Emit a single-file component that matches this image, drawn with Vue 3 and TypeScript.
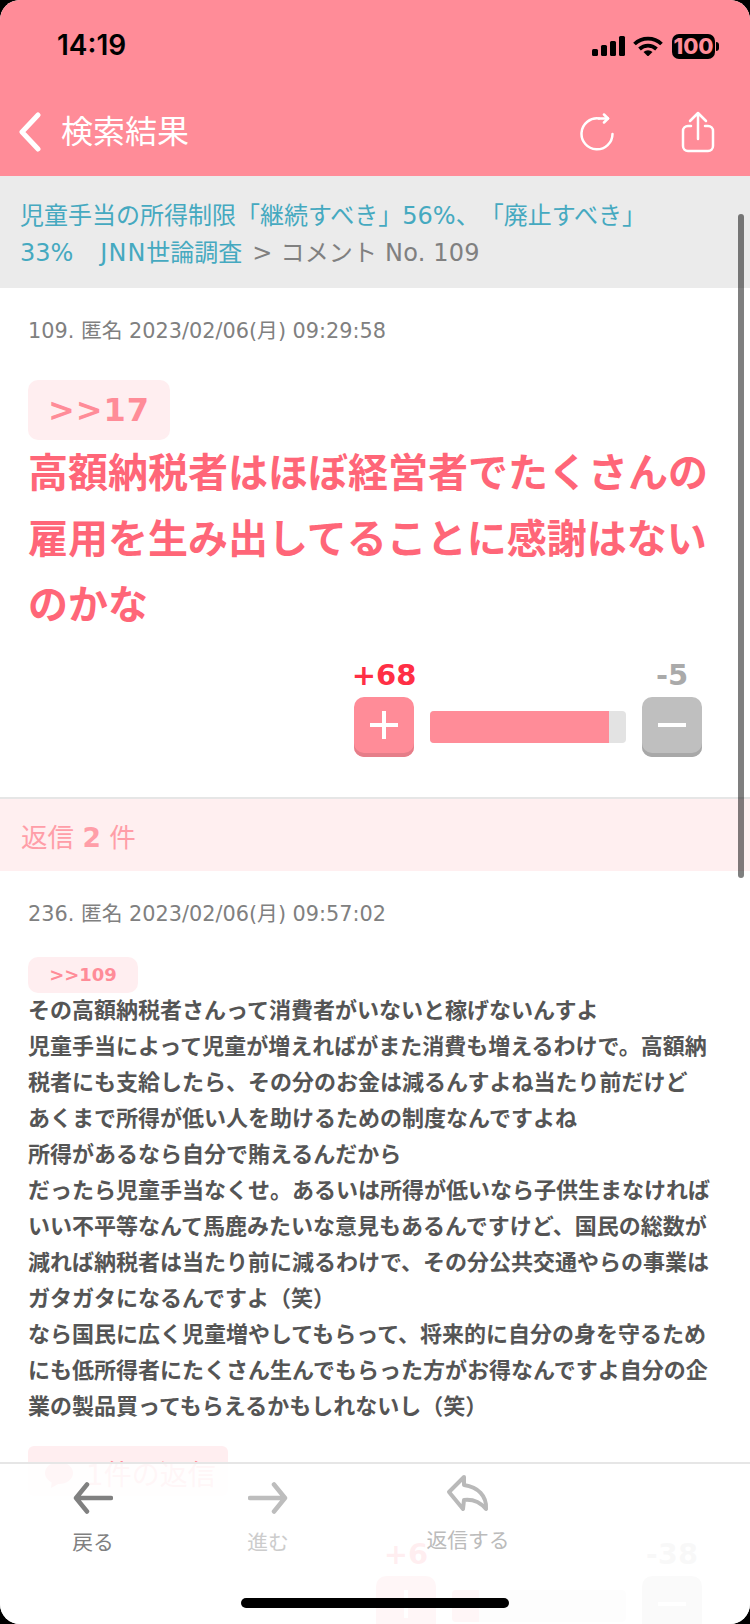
<script setup lang="ts">
interface Comment {
  no: number
  date: string
  anchor: string
  paragraphs: string[]
  plus: number
  minus: number
  barWidth: number
  barFill: number
  replies?: number
}

const first: Comment = {
  no: 109,
  date: '2023/02/06(月) 09:29:58',
  anchor: '>>17',
  paragraphs: ['高額納税者はほぼ経営者でたくさんの雇用を生み出してることに感謝はないのかな'],
  plus: 68,
  minus: 5,
  barWidth: 196,
  barFill: 179
}

const second: Comment = {
  no: 236,
  date: '2023/02/06(月) 09:57:02',
  anchor: '>>109',
  paragraphs: [
    'その高額納税者さんって消費者がいないと稼げないんすよ',
    '児童手当によって児童が増えればがまた消費も増えるわけで。高額納税者にも支給したら、その分のお金は減るんすよね当たり前だけど',
    'あくまで所得が低い人を助けるための制度なんですよね',
    '所得があるなら自分で賄えるんだから',
    'だったら児童手当なくせ。あるいは所得が低いなら子供生まなければいい不平等なんて馬鹿みたいな意見もあるんですけど、国民の総数が減れば納税者は当たり前に減るわけで、その分公共交通やらの事業はガタガタになるんですよ（笑）',
    'なら国民に広く児童増やしてもらって、将来的に自分の身を守るためにも低所得者にたくさん生んでもらった方がお得なんですよ自分の企業の製品買ってもらえるかもしれないし（笑）'
  ],
  plus: 6,
  minus: 38,
  barWidth: 174,
  barFill: 27,
  replies: 1
}
</script>

<template>
  <div class="screen">
    <header class="top">
      <div class="status">
        <span class="time">14:19</span>
        <div class="status-icons">
          <svg class="signal" width="34" height="20" viewBox="0 0 34 20">
            <rect x="0" y="13" width="6" height="7" rx="1.5" />
            <rect x="9" y="9" width="6" height="11" rx="1.5" />
            <rect x="18" y="5" width="6" height="15" rx="1.5" />
            <rect x="27" y="0" width="6" height="20" rx="1.5" />
          </svg>
          <svg class="wifi" width="30" height="20" viewBox="0 0 30 20">
            <path d="M1.500 8a19.500 19.500 0 0 1 27 0" />
            <path d="M6.500 13a12.500 12.500 0 0 1 17 0" />
            <path class="wifi-dot" d="M15 20.500l-4.500-4.500a6.400 6.400 0 0 1 9 0z" />
          </svg>
          <div class="battery">
            <span class="battery-body">100</span>
            <span class="battery-nub"></span>
          </div>
        </div>
      </div>
      <div class="nav">
        <svg class="back" width="24" height="40" viewBox="0 0 24 40">
          <path d="M20 3L4 20l16 17" />
        </svg>
        <span class="nav-title">検索結果</span>
        <svg class="reload" width="34" height="38" viewBox="0 0 34 38">
          <path d="M19 5.500A15.500 15.500 0 1 0 32.500 21" />
          <path d="M24 1.500l4 4-4 4" />
          <path d="M19 5.500h9" />
        </svg>
        <svg class="share" width="34" height="42" viewBox="0 0 34 42">
          <path d="M10 15H7a5 5 0 0 0-5 5v15a5 5 0 0 0 5 5h20a5 5 0 0 0 5-5V20a5 5 0 0 0-5-5h-3" />
          <path d="M17 28V2M9 10l8-8 8 8" />
        </svg>
      </div>
    </header>

    <div class="crumb">
      <span class="crumb-link">児童手当の所得制限「継続すべき」56%、「廃止すべき」<br />33%　<span class="crumb-jnn">JNN</span>世論調査</span>
      <span class="crumb-tail">&gt; コメント No. 109</span>
    </div>

    <section class="comment first">
      <div class="meta">{{ first.no }}. 匿名 {{ first.date }}</div>
      <div class="anchor anchor-large">{{ first.anchor }}</div>
      <p class="headline">{{ first.paragraphs[0] }}</p>
      <div class="vote-row">
        <div class="vote">
          <span class="count count-plus">+{{ first.plus }}</span>
          <button class="vote-btn btn-plus"><i class="bar-h"></i><i class="bar-v"></i></button>
        </div>
        <div class="meter" :style="{ width: first.barWidth + 'px' }">
          <div class="meter-fill" :style="{ width: first.barFill + 'px' }"></div>
        </div>
        <div class="vote">
          <span class="count count-minus">-{{ first.minus }}</span>
          <button class="vote-btn btn-minus"><i class="bar-h"></i></button>
        </div>
      </div>
    </section>

    <div class="reply-band">返信 <b>2</b> 件</div>

    <section class="comment second">
      <div class="meta">{{ second.no }}. 匿名 {{ second.date }}</div>
      <div class="anchor anchor-small">{{ second.anchor }}</div>
      <div class="body">
        <p v-for="(line, i) in second.paragraphs" :key="i">{{ line }}</p>
      </div>
      <div class="replies">
        <svg width="30" height="26" viewBox="0 0 30 26">
          <ellipse cx="15" cy="11" rx="14" ry="11" />
          <path d="M8 18l-1 8 9-5z" />
        </svg>
        <span>{{ second.replies }}件の返信</span>
      </div>
      <div class="vote-row vote-row-second">
        <div class="vote">
          <span class="count count-plus">+{{ second.plus }}</span>
          <button class="vote-btn btn-plus"><i class="bar-h"></i><i class="bar-v"></i></button>
        </div>
        <div class="meter" :style="{ width: second.barWidth + 'px' }">
          <div class="meter-fill" :style="{ width: second.barFill + 'px' }"></div>
        </div>
        <div class="vote">
          <span class="count count-minus">-{{ second.minus }}</span>
          <button class="vote-btn btn-minus"><i class="bar-h"></i></button>
        </div>
      </div>
    </section>

    <div class="scrollbar"></div>

    <nav class="tabbar">
      <div class="tab tab-back">
        <svg width="40" height="32" viewBox="0 0 40 32">
          <path d="M38 16H3M14 2.500L3 16l11 13.500" />
        </svg>
        <span>戻る</span>
      </div>
      <div class="tab tab-forward">
        <svg width="40" height="32" viewBox="0 0 40 32">
          <path d="M2 16h35M26 2.500L37 16 26 29.500" />
        </svg>
        <span>進む</span>
      </div>
      <div class="tab tab-reply">
        <svg width="44" height="38" viewBox="0 0 44 38">
          <path d="M18 3L3 18l14 17 1-9c9-1 16 2 22 9 1-13-8-22-22-24z" />
        </svg>
        <span>返信する</span>
      </div>
    </nav>

    <div class="home"></div>
  </div>
</template>

<style scoped>
.screen {
  position: relative;
  width: 750px;
  height: 1624px;
  overflow: hidden;
  background: #fff;
  border-radius: 20px;
  font-family: "DejaVu Sans", "Noto Sans CJK JP", sans-serif;
  text-spacing-trim: space-all;
}

.top {
  height: 176px;
  background: #ff8c98;
}

.status {
  height: 96px;
  padding: 27px 31px 0 57px;
  display: flex;
  justify-content: space-between;
  align-items: flex-start;
  box-sizing: border-box;
}

.time {
  font-family: Inter, sans-serif;
  font-size: 28px;
  font-weight: 600;
  line-height: 36px;
  color: #000;
}

.status-icons {
  display: flex;
  align-items: center;
  gap: 9px;
  height: 32px;
  margin-top: 3px;
}

.signal {
  fill: #000;
  margin-right: -2px;
}

.wifi {
  fill: none;
  stroke: #000;
  stroke-width: 3.800;
}

.wifi-dot {
  fill: #000;
  stroke: none;
}

.battery {
  display: flex;
  align-items: center;
  gap: 1px;
}

.battery-body {
  width: 43px;
  height: 25px;
  background: #000;
  border-radius: 7px;
  color: #ff8c98;
  font-family: Inter, sans-serif;
  font-size: 22px;
  font-weight: 800;
  line-height: 25px;
  text-align: center;
}

.battery-nub {
  width: 3px;
  height: 9px;
  background: #000;
  border-radius: 0 3px 3px 0;
}

.nav {
  height: 72px;
  display: flex;
  align-items: center;
  padding-left: 18px;
  padding-right: 35px;
}

.nav svg {
  fill: none;
  stroke: #fff;
  stroke-linecap: round;
  stroke-linejoin: round;
}

.back {
  stroke-width: 5;
}

.nav-title {
  flex: 1;
  margin-left: 19px;
  font-size: 32px;
  line-height: 40px;
  color: #fff;
}

.reload {
  stroke-width: 2.500;
  margin-right: 67px;
}

.share {
  stroke-width: 2.500;
}

.crumb {
  height: 112px;
  box-sizing: border-box;
  padding: 22px 20px 0;
  background: #ebebeb;
  font-size: 24px;
  line-height: 37px;
  color: #808080;
}

.crumb-link {
  color: #45a9c0;
}

.crumb-jnn {
  margin-left: 3px;
  letter-spacing: 1px;
}

.crumb-tail {
  margin-left: 10px;
  letter-spacing: 0.2px;
}

.comment {
  padding: 27px 0 0 28px;
}

.first {
  height: 511px;
  box-sizing: border-box;
  border-bottom: 2px solid #e6e6e6;
}

.meta {
  font-size: 20.800px;
  line-height: 32px;
  color: #808080;
}

.anchor {
  background: #ffeef0;
  color: #ff8c98;
  font-weight: 700;
  text-align: center;
  box-sizing: border-box;
}

.anchor-large {
  width: 142px;
  height: 60px;
  margin-top: 33px;
  border-radius: 10px;
  font-size: 32px;
  line-height: 60px;
  letter-spacing: 1px;
}

.anchor-small {
  width: 110px;
  height: 36px;
  margin-top: 27px;
  border-radius: 10px;
  font-size: 18px;
  line-height: 36px;
}

.headline {
  margin: 0;
  width: 690px;
  font-size: 40px;
  font-weight: 700;
  line-height: 66px;
  color: #ff6678;
}

.vote-row {
  display: flex;
  align-items: flex-end;
  justify-content: flex-end;
  padding-right: 48px;
  margin-top: 20px;
}

.vote-row-second {
  margin-top: 41px;
}

.vote {
  display: flex;
  flex-direction: column;
  align-items: center;
  width: 60px;
  gap: 5px;
}

.count {
  font-size: 29px;
  font-weight: 700;
  line-height: 34px;
  white-space: nowrap;
}

.count-plus {
  color: #ff2f45;
}

.count-minus {
  color: #aaaaaa;
}

.vote-btn {
  position: relative;
  width: 60px;
  height: 60px;
  padding: 0;
  border: 0;
  border-radius: 10px;
  display: block;
}

.btn-plus {
  background: #ff8c98;
  box-shadow: inset 0 -4px 0 #e57e89;
}

.btn-minus {
  background: #bfbfbf;
  box-shadow: inset 0 -4px 0 #a8a8a8;
}

.bar-h,
.bar-v {
  position: absolute;
  background: #fff;
}

.bar-h {
  left: 16px;
  top: 26px;
  width: 28px;
  height: 4px;
}

.bar-v {
  left: 28px;
  top: 14px;
  width: 4px;
  height: 28px;
}

.meter {
  height: 32px;
  margin: 0 16px 14px;
  background: #e3e3e3;
  border-radius: 4px;
  overflow: hidden;
}

.meter-fill {
  height: 100%;
  background: #ff8c98;
}

.reply-band {
  height: 72px;
  box-sizing: border-box;
  padding: 3px 0 0 21px;
  background: #ffeff0;
  font-size: 26.500px;
  line-height: 72px;
  color: #ff9ea8;
}

.body {
  width: 690px;
  font-size: 22px;
  font-weight: 700;
  line-height: 36px;
  color: #555555;
}

.body p {
  margin: 0;
}

.replies {
  display: flex;
  align-items: center;
  gap: 12px;
  width: 200px;
  height: 50px;
  margin-top: 21px;
  padding: 3px 0 0 16px;
  box-sizing: border-box;
  background: #ffeef0;
  border-radius: 6px;
  font-size: 28px;
  color: #ff8c98;
}

.replies svg {
  fill: #ff8c98;
  flex: none;
  margin-top: 5px;
}

.scrollbar {
  position: absolute;
  top: 214px;
  right: 6px;
  width: 6px;
  height: 664px;
  border-radius: 3px;
  background: rgba(0, 0, 0, 0.5);
}

.tabbar {
  position: absolute;
  left: 0;
  right: 0;
  bottom: 0;
  height: 162px;
  box-sizing: border-box;
  border-top: 2px solid #e6e6e6;
  background: rgba(255, 255, 255, 0.92);
  display: flex;
  align-items: flex-start;
  gap: 135px;
  padding: 18px 0 0 73px;
}

.tab {
  display: flex;
  flex-direction: column;
  align-items: center;
  width: 40px;
  gap: 14px;
  font-size: 20.800px;
  line-height: 30px;
  white-space: nowrap;
}

.tab svg {
  fill: none;
  stroke-linecap: round;
  stroke-linejoin: round;
  stroke-width: 4.500;
  flex: none;
}

.tab-back {
  color: #808080;
}

.tab-back svg {
  stroke: #808080;
}

.tab-forward {
  color: #cccccc;
}

.tab-forward svg {
  stroke: #bdbdbd;
}

.tab-reply {
  margin-left: 5px;
  width: 80px;
  margin-top: -8px;
  gap: 14px;
  color: #bbbbbb;
}

.tab-reply svg {
  stroke: #b9b9b9;
  stroke-width: 4;
}

.home {
  position: absolute;
  left: 241px;
  bottom: 16px;
  width: 268px;
  height: 10px;
  border-radius: 5px;
  background: #000;
}
</style>

<style>
html,
body {
  background: #000;
}
</style>
